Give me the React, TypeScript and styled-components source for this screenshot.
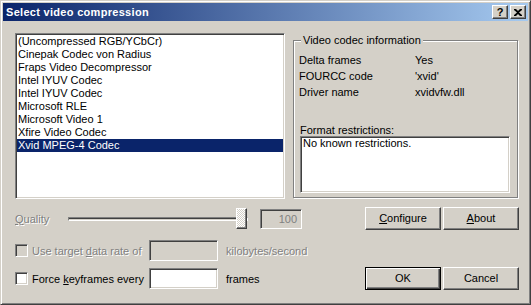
import React from "react";
import styled, { createGlobalStyle, css } from "styled-components";

const FACE = "#d4d0c8";
const SHADOW = "#808080";
const DARK = "#404040";

const Global = createGlobalStyle`
  html, body { margin: 0; padding: 0; background: ${FACE}; }
  body { font-family: "Liberation Sans", Arial, sans-serif; font-size: 11px; color: #000; }
  * { box-sizing: border-box; }
`;

const raised = css`
  border: 1px solid;
  border-color: #fff ${DARK} ${DARK} #fff;
  box-shadow: inset -1px -1px 0 ${SHADOW};
`;

const sunken = css`
  border: 1px solid;
  border-color: ${SHADOW} #fff #fff ${SHADOW};
  box-shadow: inset 1px 1px 0 ${DARK}, inset -1px -1px 0 ${FACE};
`;

const disabledText = css`
  color: ${SHADOW};
  text-shadow: 1px 1px 0 #fff;
`;

const Window = styled.div`
  width: 531px;
  height: 305px;
  background: ${FACE};
  border: 1px solid;
  border-color: ${FACE} ${DARK} ${DARK} ${FACE};
  box-shadow: inset 1px 1px 0 #fff, inset -1px -1px 0 ${SHADOW};
  padding: 2px;
  display: flex;
  flex-direction: column;
`;

const TitleBar = styled.div`
  height: 18px;
  background: linear-gradient(to right, #0a246a, #a6caf0);
  display: flex;
  align-items: center;
  padding-left: 3px;
  padding-right: 2px;
`;

const TitleText = styled.div`
  flex: 1;
  color: #fff;
  font-weight: bold;
  font-size: 11px;
  letter-spacing: 0.3px;
  line-height: 18px;
  white-space: nowrap;
`;

const TitleButton = styled.div`
  width: 16px;
  height: 14px;
  margin-left: 2px;
  background: ${FACE};
  ${raised};
  display: flex;
  align-items: center;
  justify-content: center;
  font-weight: bold;
  font-size: 11px;
  line-height: 12px;
  color: #000;
`;

const Body = styled.div`
  flex: 1;
  padding: 12px 9px 0 12px;
  display: flex;
  flex-direction: column;
`;

const TopRow = styled.div`
  display: flex;
  align-items: flex-start;
  height: 166px;
`;

const ListBox = styled.div`
  width: 270px;
  height: 166px;
  background: #fff;
  ${sunken};
  padding: 1px;
`;

const ListItem = styled.div<{ $selected?: boolean }>`
  height: 13px;
  line-height: 13px;
  padding-left: 1px;
  white-space: nowrap;
  background: ${(p) => (p.$selected ? "#0a246a" : "transparent")};
  color: ${(p) => (p.$selected ? "#fff" : "#000")};
`;

const GroupBox = styled.div`
  position: relative;
  width: 225px;
  height: 158px;
  margin-left: 8px;
  margin-top: 7px;
  border: 1px solid ${SHADOW};
  box-shadow: inset 1px 1px 0 #fff, 1px 1px 0 #fff;
  padding: 11px 7px 0 5px;
`;

const Legend = styled.div`
  position: absolute;
  top: -7px;
  left: 7px;
  padding: 0 2px;
  background: ${FACE};
  line-height: 13px;
  white-space: nowrap;
`;

const InfoGrid = styled.div`
  display: grid;
  grid-template-columns: 116px 1fr;
  line-height: 16px;
`;

const FormatLabel = styled.div`
  margin-top: 24px;
  margin-left: 1px;
  line-height: 12px;
`;

const FormatBox = styled.div`
  margin-left: 1px;
  width: 210px;
  height: 57px;
  background: #fff;
  ${sunken};
  padding: 0 2px;
  line-height: 13px;
`;

const Row = styled.div<{ $h: number; $mt: number }>`
  display: flex;
  align-items: center;
  height: ${(p) => p.$h}px;
  margin-top: ${(p) => p.$mt}px;
`;

const Label = styled.div<{ $w?: number; $disabled?: boolean; $ml?: number }>`
  white-space: nowrap;
  ${(p) => (p.$w ? `width: ${p.$w}px;` : "")}
  ${(p) => (p.$ml ? `margin-left: ${p.$ml}px;` : "")}
  ${(p) => (p.$disabled ? disabledText : "")}
`;

const Slider = styled.div`
  position: relative;
  width: 180px;
  height: 21px;
  display: flex;
  align-items: center;
`;

const Track = styled.div`
  width: 100%;
  height: 4px;
  border-top: 1px solid ${SHADOW};
  border-left: 1px solid ${SHADOW};
  border-bottom: 1px solid #fff;
  border-right: 1px solid #fff;
  background: ${DARK};
  box-shadow: inset 0 -1px 0 ${FACE};
`;

const Thumb = styled.div`
  position: absolute;
  top: 0;
  left: 168px;
  width: 11px;
  height: 21px;
  ${raised};
  background-color: ${FACE};
  background-image: repeating-conic-gradient(#fff 0 25%, ${FACE} 0 50%);
  background-size: 2px 2px;
`;

const TextBox = styled.div<{ $w: number; $h: number; $disabled?: boolean; $ml?: number }>`
  width: ${(p) => p.$w}px;
  height: ${(p) => p.$h}px;
  margin-left: ${(p) => p.$ml ?? 0}px;
  background: ${(p) => (p.$disabled ? FACE : "#fff")};
  ${sunken};
  display: flex;
  align-items: center;
  justify-content: flex-end;
  padding: 0 4px;
  color: ${SHADOW};
`;

const CheckBox = styled.div<{ $disabled?: boolean }>`
  width: 13px;
  height: 13px;
  flex: none;
  background: ${(p) => (p.$disabled ? FACE : "#fff")};
  ${sunken};
  margin-right: 4px;
`;

const ButtonGroup = styled.div`
  margin-left: auto;
  display: flex;
  gap: 2px;
`;

const Button = styled.div<{ $default?: boolean }>`
  width: 76px;
  height: 23px;
  background: ${FACE};
  display: flex;
  align-items: center;
  justify-content: center;
  line-height: 13px;
  ${(p) =>
    p.$default
      ? css`
          border: 1px solid #000;
          box-shadow: inset 1px 1px 0 #fff, inset -1px -1px 0 ${DARK}, inset -2px -2px 0 ${SHADOW};
        `
      : css`
          border: 1px solid;
          border-color: #fff ${DARK} ${DARK} #fff;
          box-shadow: inset -1px -1px 0 ${SHADOW};
        `}
`;

const codecs = [
  "(Uncompressed RGB/YCbCr)",
  "Cinepak Codec von Radius",
  "Fraps Video Decompressor",
  "Intel IYUV Codec",
  "Intel IYUV Codec",
  "Microsoft RLE",
  "Microsoft Video 1",
  "Xfire Video Codec",
  "Xvid MPEG-4 Codec",
];

const info: [string, string][] = [
  ["Delta frames", "Yes"],
  ["FOURCC code", "'xvid'"],
  ["Driver name", "xvidvfw.dll"],
];

export default function App() {
  return (
    <>
      <Global />
      <Window>
        <TitleBar>
          <TitleText>Select video compression</TitleText>
          <TitleButton>?</TitleButton>
          <TitleButton>
            <svg width="8" height="7" viewBox="0 0 8 7">
              <path d="M0 0h2l2 2 2-2h2v1L5 3.5 8 6v1H6L4 5 2 7H0V6l3-2.5L0 1z" fill="#000" />
            </svg>
          </TitleButton>
        </TitleBar>
        <Body>
          <TopRow>
            <ListBox>
              {codecs.map((c, i) => (
                <ListItem key={i} $selected={i === codecs.length - 1}>
                  {c}
                </ListItem>
              ))}
            </ListBox>
            <GroupBox>
              <Legend>Video codec information</Legend>
              <InfoGrid>
                {info.map(([k, v]) => (
                  <React.Fragment key={k}>
                    <div>{k}</div>
                    <div>{v}</div>
                  </React.Fragment>
                ))}
              </InfoGrid>
              <FormatLabel>Format restrictions:</FormatLabel>
              <FormatBox>No known restrictions.</FormatBox>
            </GroupBox>
          </TopRow>

          <Row $h={23} $mt={8}>
            <Label $w={53} $disabled>
              <u>Q</u>uality
            </Label>
            <Slider>
              <Track />
              <Thumb />
            </Slider>
            <TextBox $w={42} $h={20} $ml={12} $disabled>
              100
            </TextBox>
            <ButtonGroup>
              <Button>
                <span>
                  <u>C</u>onfigure
                </span>
              </Button>
              <Button>
                <span>
                  <u>A</u>bout
                </span>
              </Button>
            </ButtonGroup>
          </Row>

          <Row $h={21} $mt={10}>
            <CheckBox $disabled />
            <Label $w={117} $disabled>
              Use target <u>d</u>ata rate of
            </Label>
            <TextBox $w={69} $h={21} $disabled />
            <Label $ml={8} $disabled>
              kilobytes/second
            </Label>
          </Row>

          <Row $h={23} $mt={6}>
            <CheckBox />
            <Label $w={117}>
              Force <u>k</u>eyframes every
            </Label>
            <TextBox $w={69} $h={21} />
            <Label $ml={8}>frames</Label>
            <ButtonGroup>
              <Button $default>OK</Button>
              <Button>Cancel</Button>
            </ButtonGroup>
          </Row>
        </Body>
      </Window>
    </>
  );
}
